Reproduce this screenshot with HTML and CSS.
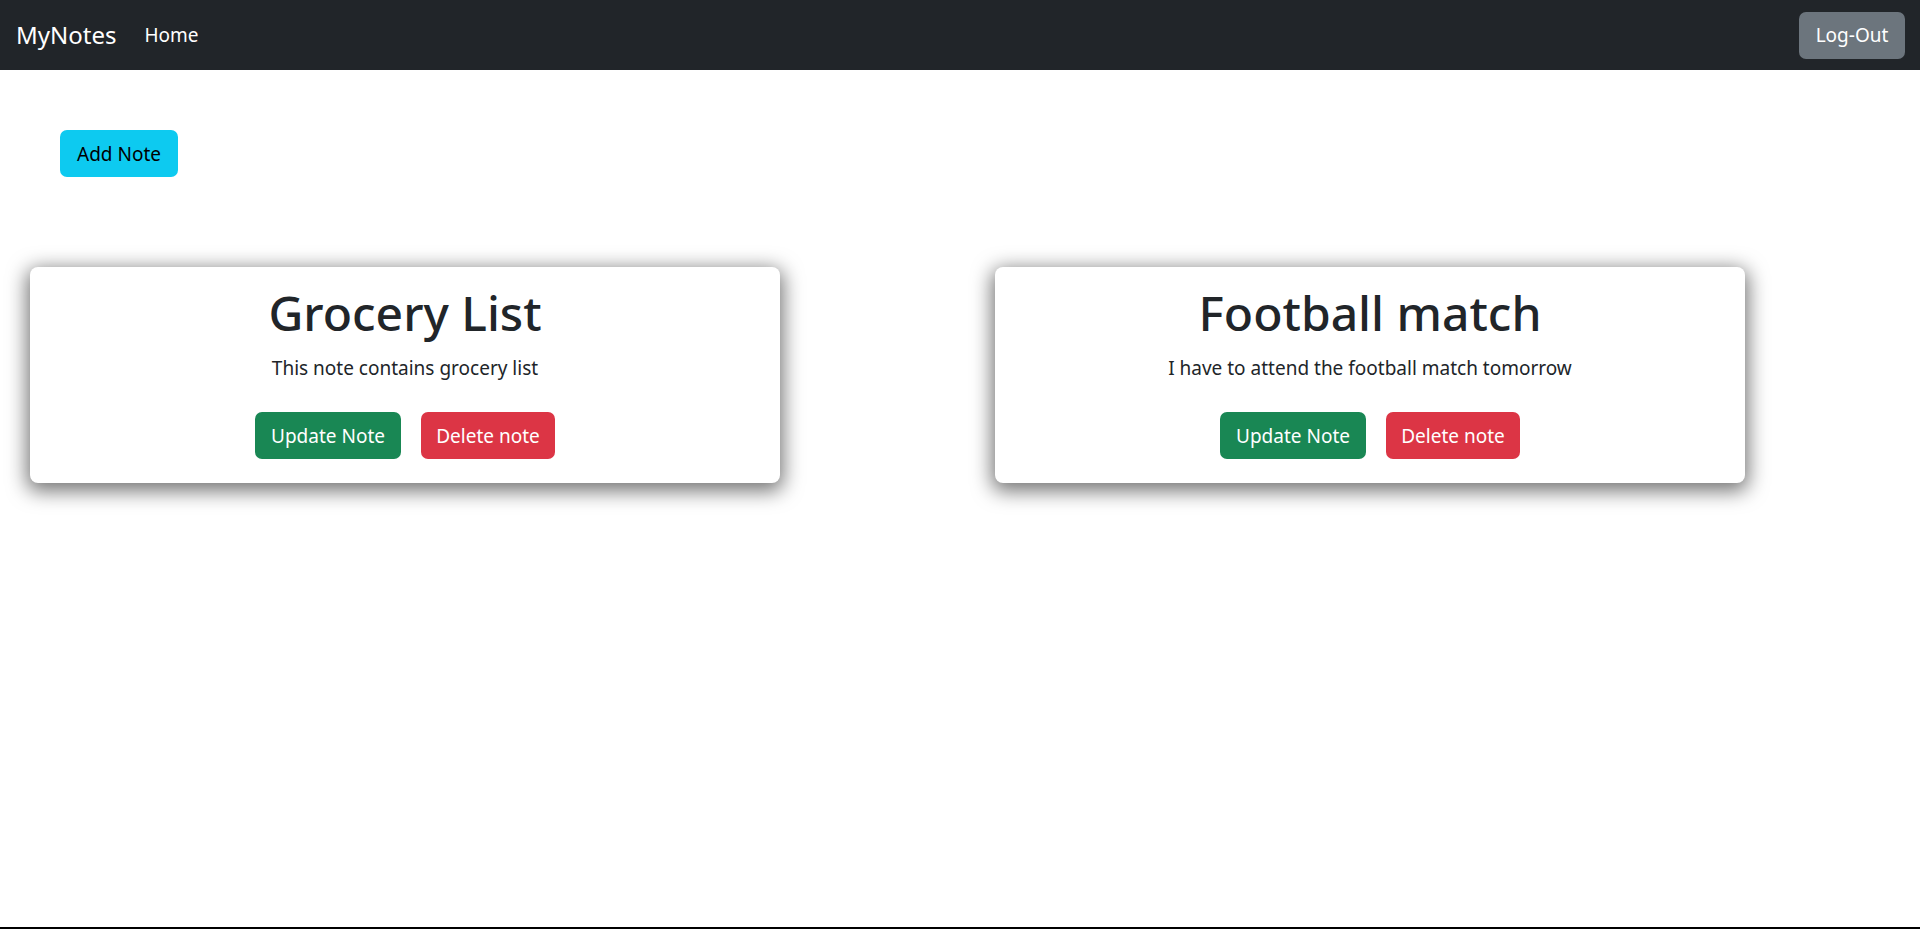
FILE: index.html
```html
<!DOCTYPE html>
<html lang="en">
<head>
<meta charset="utf-8">
<title>MyNotes</title>
<link rel="stylesheet" href="styles.css">
</head>
<body>
<nav class="navbar">
  <div class="nav-left">
    <a class="brand" href="#">MyNotes</a>
    <a class="nav-link" href="#">Home</a>
  </div>
  <button class="btn btn-secondary">Log-Out</button>
</nav>
<main class="main">
  <div class="toolbar">
    <button class="btn btn-info">Add Note</button>
  </div>
  <div class="notes">
    <div class="card">
      <h1 class="card-title">Grocery List</h1>
      <p class="card-text">This note contains grocery list</p>
      <div class="card-actions">
        <button class="btn btn-success">Update Note</button>
        <button class="btn btn-danger">Delete note</button>
      </div>
    </div>
    <div class="card">
      <h1 class="card-title">Football match</h1>
      <p class="card-text">I have to attend the football match tomorrow</p>
      <div class="card-actions">
        <button class="btn btn-success">Update Note</button>
        <button class="btn btn-danger">Delete note</button>
      </div>
    </div>
  </div>
</main>
</body>
</html>
```

FILE: styles.css
```css
* { box-sizing: border-box; }
html, body { height: 100%; }
body {
  margin: 0;
  font-family: "Noto Sans", "Open Sans", sans-serif;
  font-size: 20px;
  line-height: 1.5;
  color: #212529;
  background: #fff;
  border-bottom: 2px solid #000;
}
.navbar {
  height: 70px;
  background: #212529;
  display: flex;
  align-items: center;
  justify-content: space-between;
  padding: 0 15px 0 16px;
}
.nav-left { display: flex; align-items: center; }
.brand {
  color: #fff;
  font-size: 24px;
  text-decoration: none;
  margin-right: 28px;
}
.nav-link {
  color: #fff;
  font-size: 19px;
  text-decoration: none;
}
.btn {
  font-family: inherit;
  font-size: 19px;
  line-height: 30px;
  padding: 8px 15px;
  height: 47px;
  border: 0;
  border-radius: 7px;
  cursor: pointer;
}
.btn-secondary { background: #6c757d; color: #fff; width: 106px; }
.btn-info { background: #0dcaf0; color: #000; width: 118px; }
.btn-success { background: #198754; color: #fff; width: 146px; }
.btn-danger { background: #dc3545; color: #fff; width: 134px; }
.toolbar { padding: 60px 0 0 60px; }
.notes {
  display: flex;
  gap: 215px;
  padding: 90px 0 0 30px;
}
.card {
  width: 750px;
  height: 216px;
  background: #fff;
  border-radius: 8px;
  box-shadow: 0 5px 20px 3px rgba(0, 0, 0, 0.55);
  text-align: center;
  padding: 16px 20px 0;
}
.card-title {
  margin: 0 0 10px;
  font-size: 48px;
  font-weight: 500;
  line-height: 60px;
}
.card-text {
  margin: 0;
  font-size: 19px;
  line-height: 30px;
}
.card-actions {
  display: flex;
  justify-content: center;
  gap: 20px;
  margin-top: 29px;
}
```
